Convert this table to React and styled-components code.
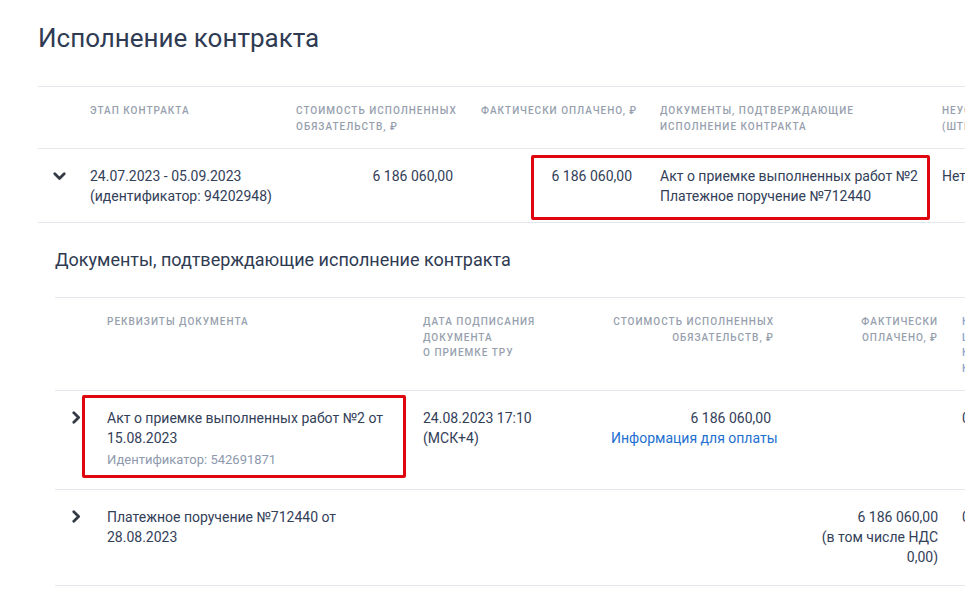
import styled, { createGlobalStyle } from "styled-components"

const GlobalStyle = createGlobalStyle`
    html, body {
        margin: 0;
        padding: 0;
        background: #fff;
        overflow: hidden;
    }
    body {
        font-family: Roboto, "Liberation Sans", sans-serif;
        color: #334059;
    }
`

const Page = styled.div`
    width: 1300px;
    padding: 22px 0 0 38px;
`

const Title = styled.h1`
    margin: 0 0 31px;
    font-size: 26px;
    line-height: 33px;
    font-weight: 400;
    color: #2f3b52;
`

const SubSection = styled.section`
    margin: 25px 0 0 17px;
`

const SubTitle = styled.h2`
    margin: 0 0 25px;
    font-size: 18px;
    line-height: 24px;
    font-weight: 400;
    color: #2f3b52;
`

const Table = styled.div`
    border-top: 1px solid #e4e7ec;
`

const Row = styled.div`
    position: relative;
    display: grid;
    grid-template-columns: ${p => p.$cols};
    border-bottom: 1px solid #e4e7ec;
    padding: ${p => p.$pad || "0"};
`

const HeadCell = styled.div`
    padding: 0 12px;
    font-size: 10px;
    line-height: 15.5px;
    font-weight: 500;
    letter-spacing: 1px;
    text-transform: uppercase;
    color: ${p => p.$blue ? "#8aa3c8" : "#979fae"};
    text-align: ${p => p.$right ? "right" : "left"};
    white-space: nowrap;
`

const Cell = styled.div`
    padding: 0 ${p => p.$pr || "12px"} 0 12px;
    font-size: 14px;
    line-height: 20px;
    color: #334059;
    text-align: ${p => p.$right ? "right" : "left"};
    white-space: ${p => p.$nowrap ? "nowrap" : "normal"};
`

const ToggleCell = styled.div`
    display: flex;
    padding-left: ${p => p.$indent || "0"};
    padding-top: ${p => p.$top || "0"};
`

const Muted = styled.div`
    margin-top: 2px;
    font-size: 13px;
    line-height: 20px;
    color: #8e99ad;
`

const Link = styled.a`
    color: #1e6fd0;
    text-decoration: none;
    white-space: nowrap;
    cursor: pointer;
`

const Mark = styled.div`
    position: absolute;
    border: 3px solid #e0060f;
    border-radius: 2px;
    box-sizing: border-box;
    pointer-events: none;
`

const ChevronDown = () => (
    <svg width="13" height="9" viewBox="0 0 13 9">
        <polyline points="1.8,1.8 6.5,6.5 11.2,1.8" fill="none" stroke="#333a44" strokeWidth="2.8" strokeLinecap="round" strokeLinejoin="round" />
    </svg>
)

const ChevronRight = () => (
    <svg width="9" height="13" viewBox="0 0 9 13">
        <polyline points="1.8,1.8 6.6,6.5 1.8,11.2" fill="none" stroke="#333a44" strokeWidth="2.8" strokeLinecap="round" strokeLinejoin="round" />
    </svg>
)

const stageCols = "40px 206px 185px 179px 282px 260px"
const docCols = "40px 316px 188px 187px 164px 260px"

function App() {
    return (
        <Page>
            <GlobalStyle />
            <Title>Исполнение контракта</Title>

            <Table>
                <Row $cols={stageCols} $pad="16px 0 14px">
                    <div />
                    <HeadCell>Этап контракта</HeadCell>
                    <HeadCell>Стоимость исполненных<br />обязательств, ₽</HeadCell>
                    <HeadCell>Фактически оплачено, ₽</HeadCell>
                    <HeadCell>Документы, подтверждающие<br />исполнение контракта</HeadCell>
                    <HeadCell>Неустойки<br />(штрафы, пени)</HeadCell>
                </Row>
                <Row $cols={stageCols} $pad="17px 0 16px">
                    <ToggleCell $indent="15px" $top="6px"><ChevronDown /></ToggleCell>
                    <Cell $nowrap>24.07.2023 - 05.09.2023<br />(идентификатор: 94202948)</Cell>
                    <Cell $right $pr="16px">6 186 060,00</Cell>
                    <Cell $right $pr="16px">6 186 060,00</Cell>
                    <Cell $nowrap>Акт о приемке выполненных работ №2<br />Платежное поручение №712440</Cell>
                    <Cell>Нет</Cell>
                    <Mark style={{ left: 493, top: 6, width: 399, height: 65 }} />
                </Row>
            </Table>

            <SubSection>
                <SubTitle>Документы, подтверждающие исполнение контракта</SubTitle>
                <Table>
                    <Row $cols={docCols} $pad="16px 0 14px">
                        <div />
                        <HeadCell>Реквизиты документа</HeadCell>
                        <HeadCell>Дата подписания<br />документа<br />о приемке ТРУ</HeadCell>
                        <HeadCell $right>Стоимость исполненных<br />обязательств, ₽</HeadCell>
                        <HeadCell $right>Фактически<br />оплачено, ₽</HeadCell>
                        <HeadCell $blue>Количество<br />штрафов<br />контрагента<br />контракта</HeadCell>
                    </Row>
                    <Row $cols={docCols} $pad="17px 0 19px">
                        <ToggleCell $indent="17px" $top="3px"><ChevronRight /></ToggleCell>
                        <Cell>
                            Акт о приемке выполненных работ №2 от 15.08.2023
                            <Muted>Идентификатор: 542691871</Muted>
                        </Cell>
                        <Cell>24.08.2023 17:10<br />(МСК+4)</Cell>
                        <Cell $right $pr="15px">6 186 060,00<br /><Link>Информация для оплаты</Link></Cell>
                        <Cell $right />
                        <Cell>0,00</Cell>
                        <Mark style={{ left: 27, top: 4, width: 324, height: 83 }} />
                    </Row>
                    <Row $cols={docCols} $pad="17px 0 18px">
                        <ToggleCell $indent="17px" $top="3px"><ChevronRight /></ToggleCell>
                        <Cell>Платежное поручение №712440 от 28.08.2023</Cell>
                        <Cell />
                        <Cell $right />
                        <Cell $right>6 186 060,00<br />(в том числе НДС<br />0,00)</Cell>
                        <Cell>0,00</Cell>
                    </Row>
                </Table>
            </SubSection>
        </Page>
    )
}

export default App
